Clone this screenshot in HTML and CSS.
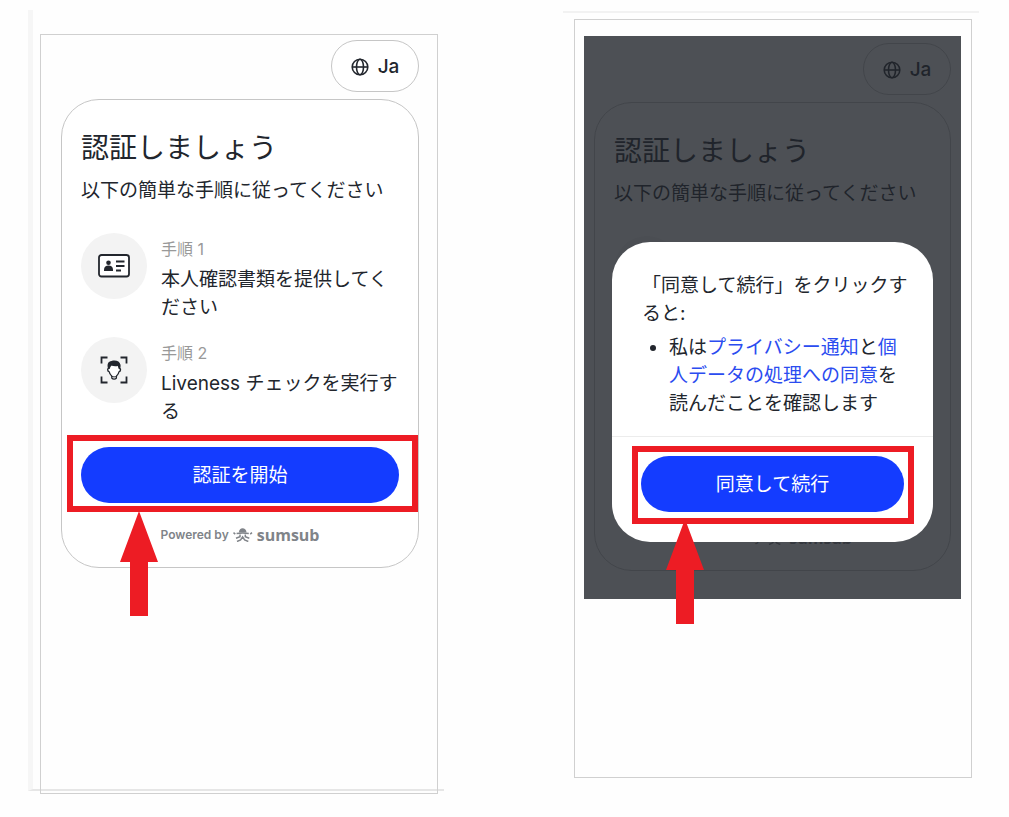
FILE: index.html
```
<!DOCTYPE html>
<html lang="ja">
<head>
  <meta charset="UTF-8" />
  <meta name="viewport" content="width=device-width, initial-scale=1.0" />
  <title>認証しましょう</title>
  <link rel="stylesheet" href="styles.css">
</head>
<body>
  <!-- shared icons -->
  <svg class="sprite" aria-hidden="true">
    <symbol id="icon-globe" viewBox="0 0 18 18">
      <g fill="none" stroke="currentColor" stroke-width="1.6">
        <circle cx="9" cy="9" r="7.8" />
        <ellipse cx="9" cy="9" rx="3.5" ry="7.8" />
        <path d="M1.2 9h15.6" />
      </g>
    </symbol>
    <symbol id="icon-id" viewBox="0 0 32 24">
      <rect x="1" y="1" width="30" height="21.5" rx="2.5" fill="#fff" stroke="currentColor" stroke-width="1.8" />
      <circle cx="10.5" cy="8.8" r="2.3" fill="currentColor" />
      <path d="M6 17v-1.500c0-2.500 2-4 4.500-4s4.500 1.500 4.500 4V17z" fill="currentColor" />
      <path d="M18 7.500h8.500M18 12h8.500M18 16.500h5" stroke="currentColor" stroke-width="1.8" />
    </symbol>
    <symbol id="icon-face" viewBox="0 0 28 28">
      <path d="M1.500 7.500v-6h6M20.500 1.500h6v6M26.500 20.500v6h-6M7.500 26.500h-6v-6" fill="none" stroke="currentColor" stroke-width="1.800" />
      <path d="M8.600 12.500c-1.300-.3-1.300 3 .5 3.200.5 2 1.400 3.300 2.600 4.300l.2 2.300c1 1 3.400 1 4.400 0l.2-2.300c1.200-1 2.100-2.300 2.600-4.300 1.800-.2 1.800-3.500.5-3.200V8.500h-11z" fill="#fff" stroke="currentColor" stroke-width="1.300" stroke-linejoin="round" />
      <path d="M11.800 20.300c1.500.8 3.100.8 4.600 0" fill="none" stroke="currentColor" />
      <path d="M8.200 13C6.700 7.800 8.300 5.300 11.500 5c4.200-1.300 8.400.2 8.900 3.900.2 1.500-.2 2.900-.6 4.100l-1.200-.2-.8-2.700c-2.500.4-4.700.2-6.300-.5-.9.9-1.300 2-1.900 3.400z" fill="currentColor" />
    </symbol>
    <symbol id="icon-sumsub" viewBox="0 0 20 14">
      <path d="M5.800 4.400C6.200 1.800 7.600.3 9.600.3s3.500 1.500 4 4.100z" fill="currentColor" />
      <g fill="none" stroke="currentColor" stroke-width="1.500">
        <path d="M3.600 5.500c4-.6 8.200-.6 12.200 0" />
        <path d="M.5 4.700l1.800 1.500M19 4.700l-1.800 1.500" />
        <path d="M7 6.500v2.200L3 10.200M12.300 6.500v2.200l4 1.500" />
        <path d="M4 13.500l3.600-1.600 2-3 2 3 3.700 1.600" />
      </g>
    </symbol>
    <symbol id="icon-arrow" viewBox="0 0 38 105">
      <path d="M19 0L38 51H28V105H10V51H0z" fill="currentColor" />
    </symbol>
  </svg>

  <main class="guide">
    <section class="shot shot-start">
      <div class="phone">
        <div class="screen">
          <button class="lang" type="button"><svg class="globe"><use href="#icon-globe" /></svg>Ja</button>
          <div class="card">
            <h1>認証しましょう</h1>
            <p class="lead">以下の簡単な手順に従ってください</p>
            <ul class="steps">
              <li>
                <span class="step-icon"><svg width="32" height="24"><use href="#icon-id" /></svg></span>
                <div class="step-text">
                  <span class="step-no">手順 1</span>
                  <p>本人確認書類を提供してください</p>
                </div>
              </li>
              <li>
                <span class="step-icon"><svg width="28" height="28"><use href="#icon-face" /></svg></span>
                <div class="step-text">
                  <span class="step-no">手順 2</span>
                  <p>Liveness チェックを実行する</p>
                </div>
              </li>
            </ul>
            <div class="action">
              <button class="btn" type="button">認証を開始</button>
              <span class="highlight highlight-start"><svg class="arrow"><use href="#icon-arrow" /></svg></span>
            </div>
            <div class="powered">Powered by <svg width="20" height="14"><use href="#icon-sumsub" /></svg><span class="brand">sumsub</span></div>
          </div>
        </div>
      </div>
    </section>

    <section class="shot shot-consent">
      <div class="phone">
        <div class="screen dimmed">
          <div inert>
            <button class="lang" type="button"><svg class="globe"><use href="#icon-globe" /></svg>Ja</button>
            <div class="card card-behind">
              <h1>認証しましょう</h1>
              <p class="lead">以下の簡単な手順に従ってください</p>
              <div class="steps">
                <span class="step-icon"></span>
              </div>
              <div class="powered">Powered by <svg width="20" height="14"><use href="#icon-sumsub" /></svg><span class="brand">sumsub</span></div>
            </div>
          </div>
          <div class="overlay"></div>
          <div class="modal" role="dialog" aria-label="同意">
            <div class="modal-body">
              <p>「同意して続行」をクリックすると:</p>
              <ul>
                <li>私は<a href="#">プライバシー通知</a>と<a href="#">個人データの処理への同意</a>を読んだことを確認します</li>
              </ul>
            </div>
            <div class="modal-footer">
              <div class="action">
                <button class="btn" type="button">同意して続行</button>
                <span class="highlight highlight-consent"><svg class="arrow"><use href="#icon-arrow" /></svg></span>
              </div>
            </div>
          </div>
        </div>
      </div>
    </section>
  </main>
</body>
</html>
```
FILE: styles.css
```
* {
  box-sizing: border-box;
}

body {
  margin: 0;
  background: #fefefe;
  color: #22262d;
  font-family: Inter, "Noto Sans CJK JP", sans-serif;
  font-size: 19px;
  line-height: 28px;
}

h1, p, ul {
  margin: 0;
  padding: 0;
}

button {
  font: inherit;
  cursor: pointer;
}

.sprite {
  display: none;
}

.guide {
  display: grid;
  grid-template-columns: 1fr 1fr;
  align-items: start;
  gap: 119px;
  padding: 10px 30px 22px 28px;
}

/* panels with the thin page rules around them */
.shot-start {
  padding: 24px 6px 0 7px;
  border-left: 5px solid #f6f6f6;
  border-bottom: 2px solid #e6e6e6;
}

.shot-start .phone {
  min-height: 760px;
  margin-bottom: -5px;
  padding: 5px 18px 20px 20px;
}

.shot-consent {
  margin-top: 1px;
  padding: 6px 7px 0 11px;
  border-top: 2px solid #f2f2f2;
}

.shot-consent .phone {
  min-height: 759px;
  padding: 16px 10px 20px 9px;
}

.phone {
  border: 1px solid #d0d0d0;
}

.screen {
  position: relative;
}

.dimmed {
  padding: 7px 10px 28px;
}

.lang {
  display: flex;
  align-items: center;
  justify-content: center;
  gap: 9px;
  width: 88px;
  height: 52px;
  margin: 0 0 7px auto;
  padding: 1px 0 0;
  background: #fff;
  color: inherit;
  border: 1px solid #c6c6c6;
  border-radius: 26px;
  font-weight: 500;
}

.globe {
  width: 18px;
  height: 18px;
}

.card {
  padding: 28px 19px 22px;
  background: #fff;
  border: 1px solid #c6c6c6;
  border-radius: 38px;
}

/* the middle of this card is under the modal */
.card-behind {
  display: flex;
  flex-direction: column;
  min-height: 469px;
}

.card-behind .powered {
  margin-top: auto;
}

h1 {
  font-size: 28px;
  font-weight: 400;
  line-height: 40px;
}

.lead {
  margin-top: 9px;
}

.steps {
  display: flex;
  flex-direction: column;
  gap: 16px;
  margin-top: 28px;
  list-style: none;
}

.steps li {
  display: flex;
  gap: 14px;
}

.step-icon {
  flex: none;
  display: flex;
  align-items: center;
  justify-content: center;
  width: 66px;
  height: 66px;
  background: #f3f3f3;
  border-radius: 50%;
}

.step-text {
  flex: 1;
  padding-top: 6px;
}

.step-no {
  display: block;
  margin-bottom: 7px;
  color: #999;
  font-size: 16px;
  line-height: 20px;
}

.steps li + li {
  margin-top: -1px;
}

.action {
  position: relative;
}

.card .action {
  margin: 21px 0 22px;
}

.btn {
  display: block;
  width: 100%;
  height: 56px;
  padding: 2px 0 0;
  background: #143cff;
  color: #fff;
  border: none;
  border-radius: 28px;
}

/* red marker over the button to press */
.highlight {
  position: absolute;
  border: 6px solid #ed1c24;
  pointer-events: none;
}

.highlight-start {
  inset: -12px -19px -9px -14px;
}

.highlight-consent {
  inset: -10px -10px -12px -9px;
}

.arrow {
  position: absolute;
  top: calc(100% + 5px);
  left: 47px;
  width: 38px;
  height: 105px;
  color: #ed1c24;
}

.highlight-consent .arrow {
  top: calc(100% + 1px);
  left: 28px;
}

.powered {
  display: flex;
  align-items: center;
  justify-content: center;
  gap: 4px;
  color: #808489;
  font-size: 12px;
  font-weight: 600;
  line-height: 20px;
}

.brand {
  font-family: "Open Sans", sans-serif;
  font-size: 16px;
  font-weight: 700;
}

.overlay {
  position: absolute;
  inset: 0;
  background: rgba(32, 36, 42, 0.8);
}

.modal {
  position: absolute;
  top: 206px;
  left: 28px;
  right: 28px;
  background: #fff;
  border-radius: 38px;
}

.modal-body {
  padding: 30px 24px 18px 30px;
}

.modal-body ul {
  margin-top: 6px;
  padding-left: 27px;
}

.modal-body a {
  color: #2b4cf0;
  text-decoration: none;
}

.modal-footer {
  padding: 19px 29px 30px;
  border-top: 1px solid #ececec;
}
```
